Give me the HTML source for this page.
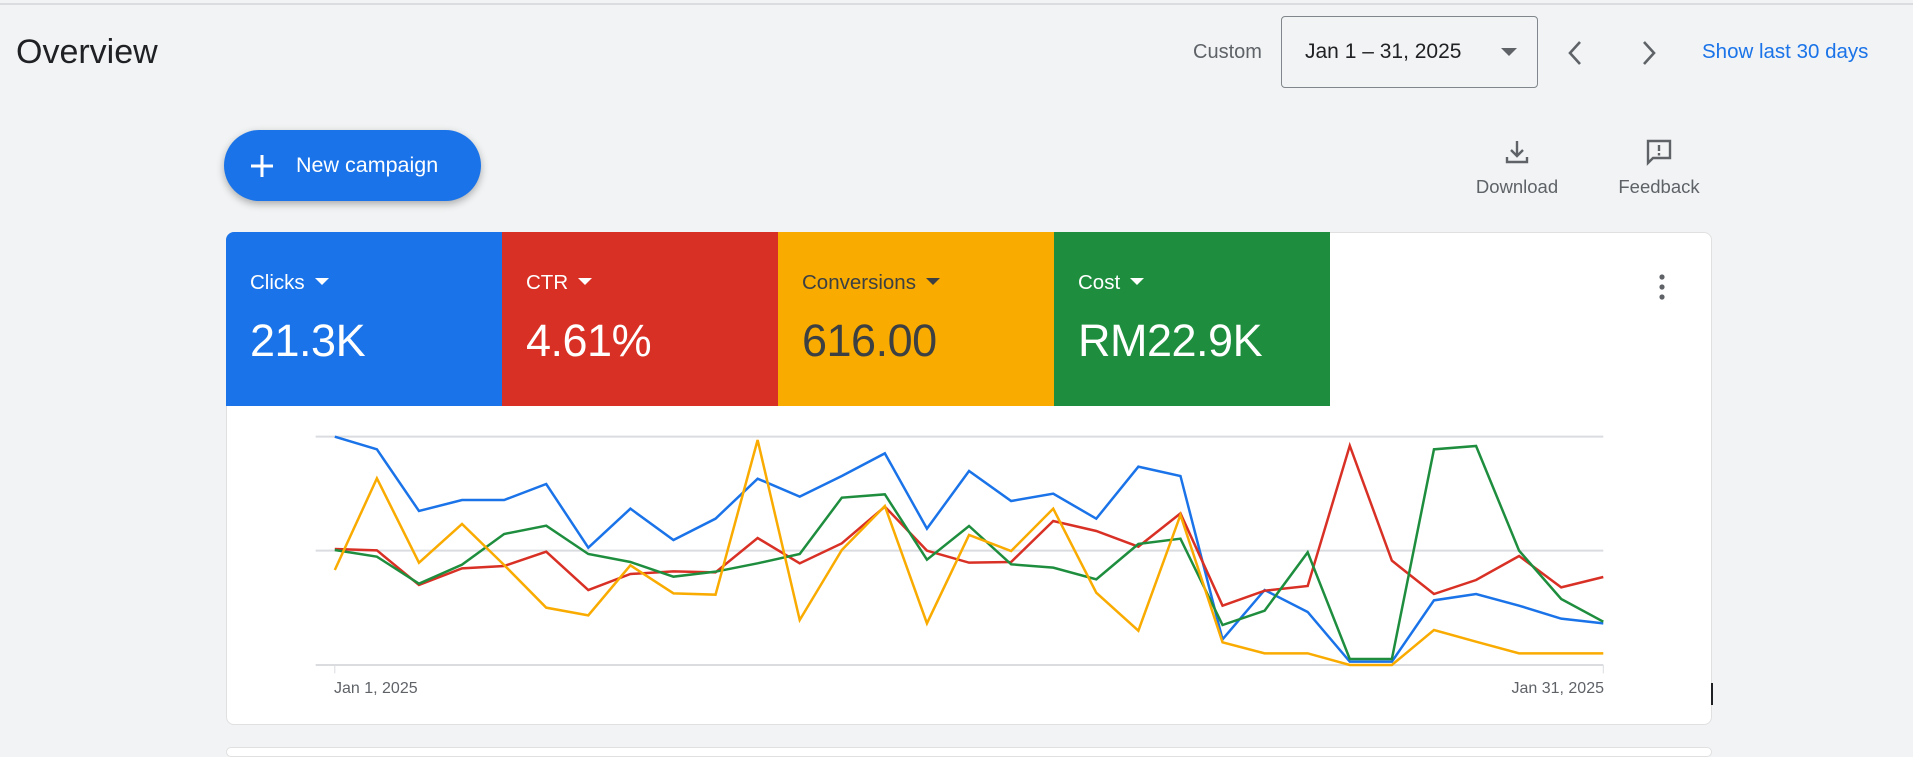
<!DOCTYPE html>
<html><head><meta charset="utf-8"><style>
*{margin:0;padding:0;box-sizing:border-box}
body{width:1913px;height:752px;background:#f1f3f4;font-family:"Liberation Sans",Arial,sans-serif;position:relative;overflow:hidden;color:#202124}
.a{position:absolute}
.tile{position:absolute;top:232px;height:174px;width:276px;color:#fff}
.tile .l{position:absolute;left:24px;top:39px;font-size:20.5px}
.tile .l:after{content:"";display:inline-block;margin-left:10px;border-left:7px solid transparent;border-right:7px solid transparent;border-top:7px solid currentColor;vertical-align:4px}
.tile .v{position:absolute;left:24px;top:83px;font-size:45px;letter-spacing:-0.5px}
</style></head><body>
<div class="a" style="left:0;top:3px;width:1913px;height:2px;background:#dadce0"></div>
<div class="a" style="left:16px;top:33px;font-size:34px;color:#202124">Overview</div>
<div class="a" style="left:1193px;top:41px;font-size:20px;color:#5f6368">Custom</div>
<div class="a" style="left:1281px;top:16px;width:257px;height:72px;border:1px solid #80868b;border-radius:4px;background:#f1f3f4"></div>
<div class="a" style="left:1305px;top:40px;font-size:21px;color:#202124">Jan 1 – 31, 2025</div>
<div class="a" style="left:1501px;top:48px;border-left:8px solid transparent;border-right:8px solid transparent;border-top:8px solid #5f6368"></div>
<svg class="a" style="left:1564px;top:38px" width="24" height="30" viewBox="0 0 24 30"><path d="M16 4 L6 15 L16 26" fill="none" stroke="#5f6368" stroke-width="2.6"/></svg>
<svg class="a" style="left:1636px;top:38px" width="24" height="30" viewBox="0 0 24 30"><path d="M8 4 L18 15 L8 26" fill="none" stroke="#5f6368" stroke-width="2.6"/></svg>
<div class="a" style="left:1702px;top:40px;font-size:20.5px;color:#1a73e8;font-weight:500">Show last 30 days</div>

<div class="a" style="left:224px;top:130px;width:257px;height:71px;border-radius:36px;background:#1a73e8;box-shadow:0 3px 8px rgba(0,0,0,.3)"></div>
<svg class="a" style="left:249px;top:153px" width="26" height="26" viewBox="0 0 26 26"><path d="M13 2V24M2 13H24" stroke="#fff" stroke-width="3"/></svg>
<div class="a" style="left:296px;top:153px;font-size:21.5px;color:#fff;font-weight:500">New campaign</div>

<svg class="a" style="left:1503px;top:138px" width="28" height="28" viewBox="0 0 28 28"><path d="M14 3V18M8 12L14 18L20 12M4 19V24H24V19" fill="none" stroke="#5f6368" stroke-width="2.4"/></svg>
<div class="a" style="left:1467px;top:176px;width:100px;text-align:center;font-size:18.5px;color:#5f6368">Download</div>
<svg class="a" style="left:1644px;top:137px" width="30" height="30" viewBox="0 0 30 30"><path d="M4 4H26V21H9L4 26Z" fill="none" stroke="#5f6368" stroke-width="2.4"/><path d="M15 8V14M15 16V18.5" stroke="#5f6368" stroke-width="2.4"/></svg>
<div class="a" style="left:1609px;top:176px;width:100px;text-align:center;font-size:18.5px;color:#5f6368">Feedback</div>

<div class="a" style="left:226px;top:232px;width:1486px;height:493px;background:#fff;border-radius:8px;border:1px solid #e0e0e0"></div>
<div class="tile" style="left:226px;background:#1a73e8;border-top-left-radius:8px"><div class="l">Clicks</div><div class="v">21.3K</div></div>
<div class="tile" style="left:502px;background:#d93025"><div class="l">CTR</div><div class="v">4.61%</div></div>
<div class="tile" style="left:778px;background:#f9ab00;color:#3c4043"><div class="l">Conversions</div><div class="v">616.00</div></div>
<div class="tile" style="left:1054px;background:#1e8e3e"><div class="l">Cost</div><div class="v">RM22.9K</div></div>
<svg class="a" style="left:1656px;top:273px" width="12" height="30" viewBox="0 0 12 30"><circle cx="6" cy="4" r="2.6" fill="#5f6368"/><circle cx="6" cy="14" r="2.6" fill="#5f6368"/><circle cx="6" cy="24" r="2.6" fill="#5f6368"/></svg>

<svg class="a" style="left:220px;top:400px" width="1500" height="352" viewBox="0 0 1568 1056" preserveAspectRatio="none">
<g fill="none">
<path d="M100 110H1446M100 452H1446M100 795H1446" stroke="#dadce0" stroke-width="2" vector-effect="non-scaling-stroke"/>
<path d="M120 795V820M1446 795V820" stroke="#dadce0" stroke-width="1" vector-effect="non-scaling-stroke"/>
<polyline vector-effect="non-scaling-stroke" stroke="#1a73e8" stroke-width="2.5" points="120,110 164,148 208,333 253,300 297,300 341,252 385,443 429,326 474,420 518,356 562,236 606,290 650,228 695,160 739,386 783,213 827,303 871,281 916,356 960,200 1004,228 1048,718 1092,570 1137,636 1181,785 1225,785 1269,601 1313,582 1358,617 1402,656 1446,670"/>
<polyline vector-effect="non-scaling-stroke" stroke="#d93025" stroke-width="2.5" points="120,447 164,451 208,555 253,505 297,498 341,455 385,570 429,522 474,514 518,517 562,414 606,490 650,430 695,320 739,452 783,488 827,486 871,363 916,393 960,440 1004,340 1048,617 1092,572 1137,558 1181,137 1225,482 1269,582 1313,540 1358,468 1402,562 1446,531"/>
<polyline vector-effect="non-scaling-stroke" stroke="#1e8e3e" stroke-width="2.5" points="120,450 164,470 208,551 253,494 297,402 341,377 385,462 429,486 474,530 518,515 562,490 606,462 650,293 695,283 739,479 783,378 827,493 871,503 916,538 960,432 1004,416 1048,675 1092,632 1137,457 1181,777 1225,777 1269,148 1313,138 1358,452 1402,597 1446,665"/>
<polyline vector-effect="non-scaling-stroke" stroke="#f9ab00" stroke-width="2.5" points="120,510 164,235 208,488 253,372 297,495 341,623 385,646 429,496 474,580 518,584 562,120 606,660 650,450 695,318 739,670 783,405 827,453 871,326 916,578 960,692 1004,345 1048,727 1092,760 1137,760 1181,795 1225,795 1269,690 1313,725 1358,760 1402,760 1446,760"/>
</g>
</svg>
<div class="a" style="left:334px;top:680px;font-size:16px;color:#5f6368">Jan 1, 2025</div>
<div class="a" style="left:1504px;top:680px;width:100px;text-align:right;font-size:16px;color:#5f6368">Jan 31, 2025</div>
<div class="a" style="left:1711px;top:683px;width:2px;height:22px;background:#202124"></div>
<div class="a" style="left:226px;top:747px;width:1486px;height:10px;background:#fff;border:1px solid #e0e0e0;border-radius:8px"></div>
</body></html>
